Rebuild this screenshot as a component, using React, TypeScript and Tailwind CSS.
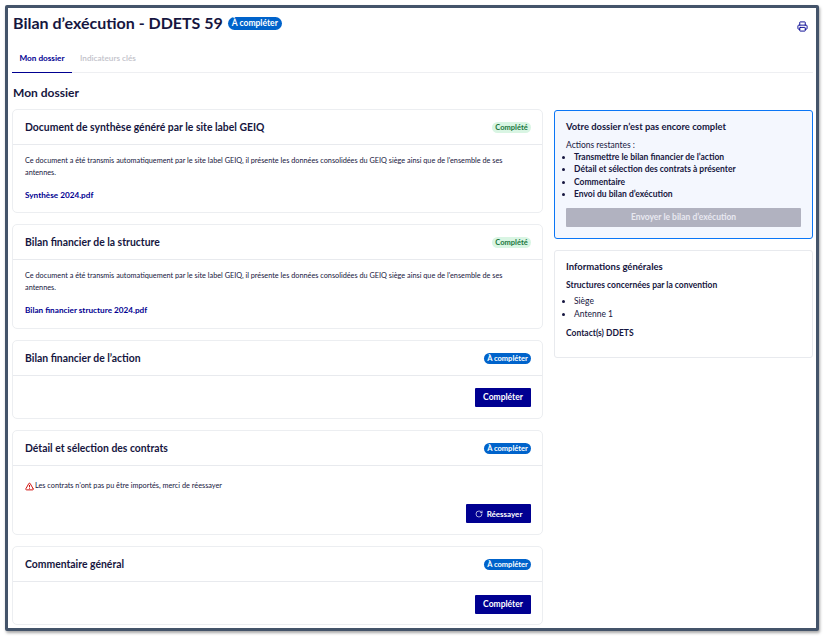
import { Printer, RotateCw, TriangleAlert } from 'lucide-react';

const FONT = "font-['Lato','Noto_Sans',sans-serif]";
const NAVY = 'text-[#000091]';

function Badge({ done, big }: { done?: boolean; big?: boolean }) {
  if (done) {
    return (
      <span className="h-[11px] rounded-full bg-[#d9f5e3] text-[#18753c] text-[7.5px] font-bold leading-[11px] w-[39px] text-center">
        Complété
      </span>
    );
  }
  return (
    <span className={`rounded-full bg-[#0063cb] text-white font-bold text-center ${big ? 'h-[13px] w-[54px] text-[8.5px] leading-[13px]' : 'h-[11px] w-[47px] text-[7.5px] leading-[11px]'}`}>
      À compléter
    </span>
  );
}

function Card({ title, done, height, children }: { title: string; done?: boolean; height: string; children: React.ReactNode }) {
  return (
    <section className={`${height} bg-white rounded-[5px] border border-[#eceef1] flex flex-col`}>
      <div className="h-[35px] shrink-0 pl-[12px] pr-[11px] flex items-center justify-between border-b border-[#e8eaee]">
        <h2 className="pt-[2px] text-[10.4px] font-bold text-[#161640]">{title}</h2>
        <Badge done={done} />
      </div>
      {children}
    </section>
  );
}

function DocBody({ file }: { file: string }) {
  return (
    <div className="pl-[12px] pr-[12px] pt-[10px]">
      <p className="text-[7.3px] leading-[11.5px] text-[#161640]">
        Ce document a été transmis automatiquement par le site label GEIQ, il présente les données consolidées du GEIQ siège ainsi que de l'ensemble de ses antennes.
      </p>
      <a className={`block mt-[11px] text-[8.2px] leading-[12px] font-bold ${NAVY}`}>{file}</a>
    </div>
  );
}

function ActionButton({ label }: { label: string }) {
  return (
    <button className="h-[19px] w-[56px] rounded-[1px] bg-[#000091] text-white text-[8.5px] font-bold">{label}</button>
  );
}

export default function App() {
  return (
    <div className={`${FONT} w-[840px] h-[636px] bg-white pl-[5px] pt-[5px]`}>
      <div className="w-[814px] h-[626px] border-[3px] border-[#44546a] bg-white shadow-[1px_2px_3px_rgba(0,0,0,0.35)] overflow-hidden rounded-[2px] pl-[4px] pr-[3px]">
        <header className="h-[31px] pt-[5px] flex items-start justify-between">
          <div className="flex items-center gap-[5px] pl-[1px]">
            <h1 className="text-[16px] font-bold leading-[20px] text-[#161640]">Bilan d’exécution - DDETS 59</h1>
            <Badge big />
          </div>
          <Printer className={`${NAVY} w-[11px] h-[11px] mt-[8px] mr-[5px]`} strokeWidth={2} />
        </header>

        <nav className="h-[31px] mt-[3px] flex border-b border-[#eeeff2] text-[8.2px]">
          <span className={`w-[60px] pt-[10px] text-center font-bold border-b border-[#000091] h-[31px] ${NAVY}`}>Mon dossier</span>
          <span className="ml-[8px] pt-[10px] font-semibold text-[#c2c2ca]">Indicateurs clés</span>
        </nav>

        <h2 className="mt-[12px] pl-[1px] text-[12px] leading-[16px] font-bold text-[#161640]">Mon dossier</h2>

        <div className="mt-[8px] flex gap-[11px]">
          <div className="w-[531px] flex flex-col gap-[11px]">
            <Card title="Document de synthèse généré par le site label GEIQ" done height="h-[104px]">
              <DocBody file="Synthèse 2024.pdf" />
            </Card>
            <Card title="Bilan financier de la structure" done height="h-[105px]">
              <DocBody file="Bilan financier structure 2024.pdf" />
            </Card>
            <Card title="Bilan financier de l’action" height="h-[79px]">
              <div className="flex justify-end pr-[11px] pt-[12px]">
                <ActionButton label="Compléter" />
              </div>
            </Card>
            <Card title="Détail et sélection des contrats" height="h-[105px]">
              <div className="pl-[12px] pr-[11px] pt-[14px]">
                <p className="flex items-center gap-[1px] text-[7.3px] leading-[12px] text-[#161640]">
                  <TriangleAlert className="w-[9px] h-[9px] text-[#ce0500]" strokeWidth={2.5} />
                  Les contrats n’ont pas pu être importés, merci de réessayer
                </p>
                <div className="flex justify-end mt-[12px]">
                  <button className="h-[19px] w-[65px] rounded-[1px] bg-[#000091] text-white text-[8px] font-bold flex items-center justify-center gap-[4px]">
                    <RotateCw className="w-[8px] h-[8px]" strokeWidth={2} />
                    Réessayer
                  </button>
                </div>
              </div>
            </Card>
            <Card title="Commentaire général" height="h-[79px]">
              <div className="flex justify-end pr-[11px] pt-[13px]">
                <ActionButton label="Compléter" />
              </div>
            </Card>
          </div>

          <aside className="w-[259px] mt-[1px] flex flex-col gap-[11px]">
            <div className="h-[129px] rounded-[3px] border border-[#0a76f6] bg-[#f4f7fe] px-[11px] pt-[10px]">
              <h3 className="text-[9.4px] leading-[12px] font-bold text-[#161640]">Votre dossier n’est pas encore complet</h3>
              <p className="mt-[6px] text-[8.5px] leading-[12px] text-[#161640]">Actions restantes :</p>
              <ul className="list-disc pl-[8px] text-[8.5px] leading-[12.3px] font-bold text-[#161640]">
                <li>Transmettre le bilan financier de l’action</li>
                <li>Détail et sélection des contrats à présenter</li>
                <li>Commentaire</li>
                <li>Envoi du bilan d’exécution</li>
              </ul>
              <button className="mt-[8px] h-[19px] w-full rounded-[1px] bg-[#b1b2c0] text-[#e8e8f0] text-[8.5px] font-bold">Envoyer le bilan d’exécution</button>
            </div>
            <div className="h-[108px] rounded-[3px] border border-[#e8eaee] bg-white px-[11px] pt-[10px]">
              <h3 className="text-[9.5px] leading-[12px] font-bold text-[#161640]">Informations générales</h3>
              <p className="mt-[6px] text-[8.5px] leading-[12px] font-bold text-[#161640]">Structures concernées par la convention</p>
              <ul className="mt-[4px] list-disc pl-[8px] text-[8.5px] leading-[12.5px] text-[#161640]">
                <li>Siège</li>
                <li>Antenne 1</li>
              </ul>
              <p className="mt-[7px] text-[8.5px] leading-[12px] font-bold text-[#161640]">Contact(s) DDETS</p>
            </div>
          </aside>
        </div>
      </div>
    </div>
  );
}
